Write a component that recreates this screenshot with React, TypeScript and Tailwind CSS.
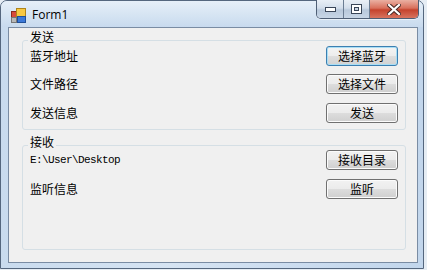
import React from 'react'

const cjk = { fontFamily: '"Noto Sans CJK SC", "Noto Sans", sans-serif' }

type BtnProps = {
  label: string
  focused?: boolean
}

const WinButton = ({ label, focused }: BtnProps) => (
  <button
    type="button"
    style={cjk}
    className={
      focused
        ? 'w-[72px] h-[20px] rounded-[3px] border border-[#3c7fb1] bg-[linear-gradient(#f4f4f4,#ececec_50%,#dedede_50%,#d2d2d2)] shadow-[inset_0_0_0_1px_#a9def5] text-[12px] leading-[18px] text-black'
        : 'w-[72px] h-[20px] rounded-[3px] border border-[#707070] bg-[linear-gradient(#f2f2f2,#ebebeb_50%,#dddddd_50%,#cfcfcf)] shadow-[inset_0_0_0_1px_#fbfbfb] text-[12px] leading-[18px] text-black'
    }
  >
    {label}
  </button>
)

const Row = ({ children, className }: { children: React.ReactNode; className?: string }) => (
  <div className={'flex items-center justify-between h-[20px] ' + (className ?? '')}>{children}</div>
)

const Label = ({ text }: { text: string }) => (
  <span style={cjk} className="text-[12px] leading-[14px] text-black">
    {text}
  </span>
)

const GroupBox = ({ title, children, className }: { title: string; children: React.ReactNode; className?: string }) => (
  <fieldset className={'ml-[13px] w-[384px] rounded-[3px] border border-[#d5dfe5] pl-[7px] pr-[7px] min-w-0 ' + (className ?? '')}>
    <legend style={cjk} className="-ml-[2px] px-[2px] pb-[6px] text-[12px] leading-[12px] text-black">
      {title}
    </legend>
    {children}
  </fieldset>
)

const FormIcon = () => (
  <svg width="15" height="15" viewBox="0 0 15 15">
    <rect x="0.5" y="3.5" width="6" height="6" fill="#d84a3a" stroke="#8a2a20" />
    <rect x="5.5" y="0.5" width="9" height="8" fill="#f7c842" stroke="#b08418" />
    <rect x="0.5" y="9.5" width="5" height="5" fill="#b9b9b9" stroke="#777" />
    <rect x="6.5" y="8.5" width="8" height="6" fill="#3b78d8" stroke="#1f4f98" />
  </svg>
)

const CaptionButtons = () => (
  <div className="flex h-[19px] -mt-[1px] rounded-b-[5px] border border-t-0 border-[#4f5f75] overflow-hidden shadow-[0_1px_0_#ffffff80]">
    <div className="w-[27px] flex items-center justify-center bg-[linear-gradient(#e9eff6,#d3deeb_45%,#b8c8db_55%,#c8d6e6)] border-r border-[#6b7d93]">
      <svg width="11" height="6" viewBox="0 0 11 6">
        <rect x="0.5" y="1.5" width="10" height="4" fill="#fff" stroke="#3a4658" />
      </svg>
    </div>
    <div className="w-[26px] flex items-center justify-center bg-[linear-gradient(#e9eff6,#d3deeb_45%,#b8c8db_55%,#c8d6e6)] border-r border-[#6b7d93]">
      <svg width="11" height="10" viewBox="0 0 11 10">
        <rect x="0.5" y="0.5" width="10" height="9" fill="#fff" stroke="#3a4658" />
        <rect x="3.5" y="3.5" width="4" height="3" fill="#c9d4e2" stroke="#3a4658" />
      </svg>
    </div>
    <div className="w-[48px] flex items-center justify-center bg-[linear-gradient(#eab0a2,#d9705c_45%,#c5432d_55%,#d8745f)]">
      <svg width="14" height="11" viewBox="0 0 14 11">
        <path d="M2 1 L12 10 M12 1 L2 10" stroke="#4a2a26" strokeWidth="4.2" strokeLinecap="square" />
        <path d="M2 1 L12 10 M12 1 L2 10" stroke="#ffffff" strokeWidth="2.2" strokeLinecap="square" />
      </svg>
    </div>
  </div>
)

const App = () => {
  return (
    <div className="w-[427px] h-[270px] bg-[#e6edf4] overflow-hidden">
      <div className="w-[424px] h-[269px] rounded-t-[7px] border border-[#55677e] bg-[linear-gradient(90deg,#c9dbee,#d6e4f3_40%,#c2d6ec)] flex flex-col">
        <div className="h-[26px] flex items-start pl-[10px] pr-[4px] bg-[linear-gradient(#e6eff8,#d4e3f2_60%,#c8daee)] rounded-t-[6px]">
          <div className="mt-[7px]">
            <FormIcon />
          </div>
          <span
            style={{ fontFamily: '"Open Sans", "Noto Sans", sans-serif' }}
            className="ml-[6px] mt-[6px] text-[12px] leading-[15px] text-black"
          >
            Form1
          </span>
          <div className="flex-1" />
          <CaptionButtons />
        </div>
        <div className="flex-1 flex px-[7px] pb-[5px]">
          <div className="w-[410px] h-[236px] shrink-0 border border-[#7a8ca3] bg-[#f0f0f0] flex flex-col">
            <GroupBox title="发送" className="mt-[3px] pb-[6px]">
              <div className="-mt-[3px]">
                <Row>
                  <Label text="蓝牙地址" />
                  <WinButton label="选择蓝牙" focused />
                </Row>
                <Row className="mt-[8px]">
                  <Label text="文件路径" />
                  <WinButton label="选择文件" />
                </Row>
                <Row className="mt-[9px]">
                  <Label text="发送信息" />
                  <WinButton label="发送" />
                </Row>
              </div>
            </GroupBox>
            <GroupBox title="接收" className="mt-[6px] pb-[50px]">
              <div className="-mt-[4px]">
                <Row>
                  <span
                    style={{ fontFamily: '"Liberation Mono", "DejaVu Sans Mono", monospace' }}
                    className="text-[11px] leading-[14px] tracking-[-0.6px] text-black"
                  >
                    E:\User\Desktop
                  </span>
                  <WinButton label="接收目录" />
                </Row>
                <Row className="mt-[9px]">
                  <Label text="监听信息" />
                  <WinButton label="监听" />
                </Row>
              </div>
            </GroupBox>
          </div>
        </div>
      </div>
    </div>
  )
}

export default App
